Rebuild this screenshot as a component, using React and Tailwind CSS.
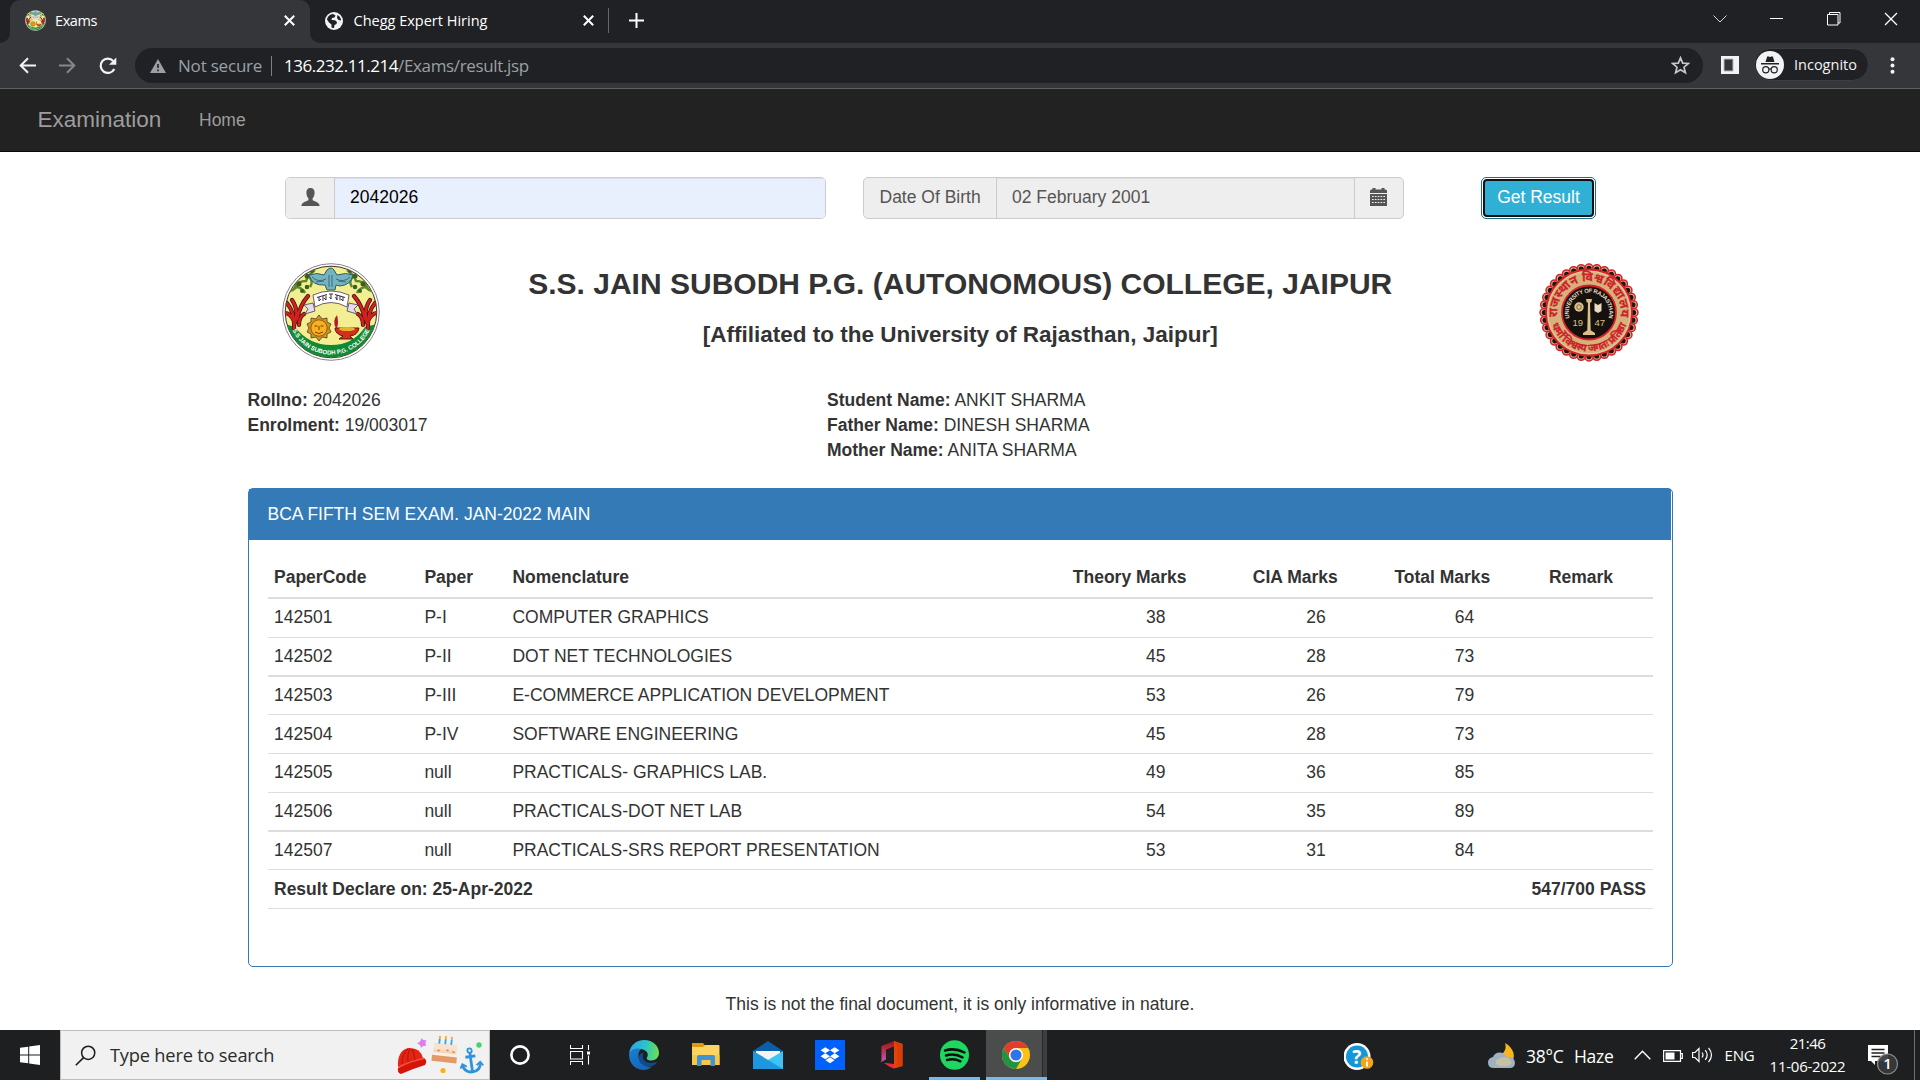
import React from "react";

const SEGOE = "font-['Open_Sans',sans-serif]";

const rows = [
  { code: "142501", paper: "P-I", name: "COMPUTER GRAPHICS", th: 38, cia: 26, total: 64, cls: "h-[39px] pt-[6px] border-b" },
  { code: "142502", paper: "P-II", name: "DOT NET TECHNOLOGIES", th: 45, cia: 28, total: 73, cls: "h-[39px] pt-[6px] border-b-2" },
  { code: "142503", paper: "P-III", name: "E-COMMERCE APPLICATION DEVELOPMENT", th: 53, cia: 26, total: 79, cls: "h-[38px] pt-[6px] border-b" },
  { code: "142504", paper: "P-IV", name: "SOFTWARE ENGINEERING", th: 45, cia: 28, total: 73, cls: "h-[39px] pt-[7px] border-b" },
  { code: "142505", paper: "null", name: "PRACTICALS- GRAPHICS LAB.", th: 49, cia: 36, total: 85, cls: "h-[39px] pt-[6px] border-b" },
  { code: "142506", paper: "null", name: "PRACTICALS-DOT NET LAB", th: 54, cia: 35, total: 89, cls: "h-[39px] pt-[6px] border-b-2" },
  { code: "142507", paper: "null", name: "PRACTICALS-SRS REPORT PRESENTATION", th: 53, cia: 31, total: 84, cls: "h-[38px] pt-[6px] border-b" },
];

const GRID = "grid grid-cols-[150.4px_88px_560.4px_180px_141.6px_154.5px_1fr] pl-[6px] border-[#dddddd]";

function SubodhLogo({ size }) {
  return (
    <svg width={size} height={size} viewBox="0 0 98 98" className="shrink-0">
      <defs>
        <clipPath id="sub-in"><circle cx="49" cy="49" r="45.500" /></clipPath>
        <path id="sub-arc" d="M7 57 A42.800 42.800 0 0 0 91 57" />
      </defs>
      <circle cx="49" cy="49" r="48.300" fill="#fff" stroke="#8d7f8b" strokeWidth="1" />
      <circle cx="49" cy="49" r="45.800" fill="#f4ee92" stroke="#3c3428" strokeWidth="1" />
      <g clipPath="url(#sub-in)">
        <path d="M3 61 L13 64 Q27 82 49 82 Q71 82 83 64 L95 61 V98 H3Z" fill="#118a35" />
        <g fill="none" stroke="#5c8a2c" strokeWidth="2.500">
          <path d="M33 7 Q26 12 24 18 Q16 18 13 24 Q20 24 23 30" />
          <path d="M65 7 Q72 12 74 18 Q82 18 85 24 Q78 24 75 30" />
          <path d="M18 18 q-3 8 -10 10 M80 18 q3 8 10 10" />
          <path d="M27 14 q5 4 1 10 M71 14 q-5 4 -1 10" />
        </g>
        <g fill="#3d5f20">
          <circle cx="25" cy="13" r="2.500" /><circle cx="17" cy="21" r="2.500" /><circle cx="25" cy="24" r="2.300" /><circle cx="30" cy="8" r="2" />
          <circle cx="73" cy="13" r="2.500" /><circle cx="81" cy="21" r="2.500" /><circle cx="73" cy="24" r="2.300" /><circle cx="68" cy="8" r="2" />
          <circle cx="20" cy="28" r="2" /><circle cx="78" cy="28" r="2" />
        </g>
        <g fill="none" stroke="#4a1a14" strokeWidth="4.200" strokeLinecap="round">
          <path d="M12 65 Q13 50 5 40 M13 60 Q17 47 10 37 M15 56 Q18 42 26 33 M12 58 Q8 50 3 50 M17 62 Q17 54 22 51" />
          <path d="M86 65 Q85 50 93 40 M85 60 Q81 47 88 37 M83 56 Q80 42 72 33 M86 58 Q90 50 95 50 M81 62 Q81 54 76 51" />
        </g>
        <g fill="none" stroke="#d3201f" strokeWidth="2.600" strokeLinecap="round">
          <path d="M12 65 Q13 50 5 40 M13 60 Q17 47 10 37 M15 56 Q18 42 26 33 M12 58 Q8 50 3 50 M17 62 Q17 54 22 51" />
          <path d="M86 65 Q85 50 93 40 M85 60 Q81 47 88 37 M83 56 Q80 42 72 33 M86 58 Q90 50 95 50 M81 62 Q81 54 76 51" />
        </g>
        <path d="M45 7 Q49 3 52 7 L55 12 Q64 9 71 12 Q69 22 58 23 L54 22 L53 27 H45 L43 22 Q30 23 27 12 Q35 9 42 12Z" fill="#74b4c0" stroke="#2e5b68" strokeWidth="1" />
        <path d="M30 14 q6 6 14 2 M68 14 q-6 6 -14 2 M34 19 l8 -1 M64 19 l-8 -1 M47 12 v12 M50 12 v12" fill="none" stroke="#34646f" strokeWidth=".9" />
        <path d="M31 32 Q49 24 67 32 L65 44 Q49 35 33 44Z" fill="#fff" stroke="#5a4a68" strokeWidth=".9" />
        <path d="M31 40 L22 42 L26 46 L23 51 L33 48Z M67 40 L76 42 L72 46 L75 51 L65 48Z" fill="#e6dcec" stroke="#5a4a68" strokeWidth=".9" />
        <path d="M35 34.500 L45 31.500 M47 31 L51 31 M53 31.500 L63 34.500 M37 34 v4 l2-2 M41 33 v5 M44 32.500 v4.500 l-2-2 M49 31 v5 l-1.500-2 M55 32 v5 l-1.500-3 M58 33 v4.500 M61 34 v4 l-2-2" stroke="#3b2b40" strokeWidth="1" fill="none" />
        <path d="M37 52 l3 4 5-1 0 4 4 2-2 4 2 4-4 2 0 4-5-1-3 4-3-4-5 1 0-4-4-2 2-4-2-4 4-2 0-4 5 1z" fill="#c7962d" stroke="#6c4515" strokeWidth=".9" />
        <circle cx="37" cy="65" r="8.200" fill="#f7b11f" stroke="#8b4d12" strokeWidth=".9" />
        <path d="M32.500 63 h3 M38.500 63 h3 M37 63 v4 M33 69 q4 3 8 0" stroke="#7a3b10" strokeWidth="1" fill="none" />
        <path d="M53 65 H77 Q76 72 68 73 L71 76 H57 L61 73 Q53 71 53 65Z" fill="#d1301d" stroke="#5b1710" strokeWidth="1" />
        <ellipse cx="65" cy="66" rx="8" ry="2" fill="#e9b22c" />
        <path d="M54 65 Q50 58 55 52 Q57 59 55 65Z" fill="#b5182a" />
      </g>
      <text fontSize="6" fontWeight="700" fill="#fff" fontFamily="Liberation Sans, sans-serif">
        <textPath href="#sub-arc" startOffset="50%" textAnchor="middle">S.S JAIN SUBODH P.G. COLLEGE</textPath>
      </text>
    </svg>
  );
}

function RajasthanLogo() {
  const scallops = Array.from({ length: 36 }, (_, i) => {
    const a = (i * Math.PI * 2) / 36;
    return [50 + 45 * Math.cos(a), 49.5 + 44.5 * Math.sin(a)];
  });
  return (
    <svg width="100" height="99" viewBox="0 0 100 99" className="shrink-0">
      <defs>
        <path id="raj-top" d="M19 57 A31.800 31.800 0 1 1 81 57" />
        <path id="raj-bot" d="M11.500 57 A39.300 39.300 0 0 0 88.500 57" />
        <path id="raj-en" d="M30.500 55 A20.200 20.200 0 1 1 69.500 55" />
      </defs>
      {scallops.map(([x, y], i) => (
        <circle key={i} cx={x} cy={y} r="4" fill="#d8b384" stroke="#d9202c" strokeWidth="1.500" />
      ))}
      {scallops.map(([x, y], i) => (
        <circle key={i} cx={50 + (x - 50) * 0.99} cy={49.5 + (y - 49.5) * 0.99} r="2.600" fill="#1c1510" />
      ))}
      <circle cx="50" cy="49.500" r="43" fill="#d5b27c" stroke="#d9202c" strokeWidth="1.800" />
      <circle cx="50" cy="49.500" r="41.200" fill="none" stroke="#e6cc9c" strokeWidth="1" />
      <circle cx="50" cy="49.500" r="27" fill="#15110e" stroke="#d9202c" strokeWidth="1.800" />
      <g fill="#cf1f2a" stroke="#cf1f2a" strokeWidth=".25" fontWeight="700" fontFamily="Noto Sans Devanagari, Noto Sans, Open Sans, sans-serif">
        <text fontSize="12"><textPath href="#raj-top" startOffset="50%" textAnchor="middle" textLength="108">राजस्थान विश्वविद्यालय</textPath></text>
        <text fontSize="10.500"><textPath href="#raj-bot" startOffset="50%" textAnchor="middle" textLength="98">धर्मो विश्वस्य जगतः प्रतिष्ठा</textPath></text>
      </g>
      <text fontSize="5.800" fontWeight="700" fill="#e9dcc0" fontFamily="Liberation Sans, sans-serif">
        <textPath href="#raj-en" startOffset="50%" textAnchor="middle" textLength="74">UNIVERSITY OF RAJASTHAN</textPath>
      </text>
      <path d="M47 36 h6 l-.7 3.500 h-4.600z M49 39.500 h2 l.7 28 h-3.400z M44 70 l4-2.500 h4 l4 2.500 v2 h-12z" fill="#dcc08c" />
      <circle cx="40" cy="44" r="4.700" fill="#dcc08c" /><circle cx="40" cy="44" r="2.300" fill="none" stroke="#6b5430" strokeWidth=".8" />
      <path d="M55.500 40 l3.500 2 3.500-2 v8 l-3.500 2 -3.500-2z" fill="#e9dcc0" />
      <g fontSize="9.500" fill="#dcc08c" fontFamily="Liberation Sans, sans-serif">
        <text x="33.500" y="62.500">19</text><text x="55.500" y="62.500">47</text>
      </g>
    </svg>
  );
}

const Cross = ({ s = 11, w = 2 }) => (
  <svg width={s} height={s} viewBox="0 0 11 11"><path d="M.8.8l9.400 9.400M10.200.8L.8 10.200" stroke="#fff" strokeWidth={w} /></svg>
);

function TabStrip() {
  return (
    <div className={"flex h-[43px] bg-[#35363a] text-[14.5px] leading-[20px] text-white " + SEGOE}>
      <div className="w-[10px] rounded-br-[10px] bg-[#202124]" />
      <div className="w-[300px] bg-[#202124]">
        <div className="flex h-full items-center rounded-t-[10px] bg-[#35363a] pb-[2px] pl-[14.500px]">
          <SubodhLogo size={21} />
          <span className="ml-[9.500px] tracking-[-0.400px]">Exams</span>
          <span className="mr-[15px] ml-auto"><Cross /></span>
        </div>
      </div>
      <div className="flex flex-1 items-center rounded-bl-[10px] bg-[#202124] pb-[2px]">
        <svg width="18" height="18" viewBox="0 0 18 18" className="ml-[15px]">
          <circle cx="9" cy="9" r="9" fill="#f1f3f4" />
          <path d="M2 7.500 C2.500 4.500 5 2.200 8 2 L10.500 3.500 L9.500 5.500 L7 6 L6.500 8 L10 8.300 L12 10 L11.500 12 L9.500 13 L9 16 C7.500 16 6.500 15.500 6.500 15.500 L6.500 12.500 L4 10.500 Z" fill="#202124" />
          <path d="M12.500 3 L12 6 L13.500 8 L16 8.500 C16 6 14.500 4 12.500 3Z" fill="#202124" />
        </svg>
        <span className="ml-[10.500px]">Chegg Expert Hiring</span>
        <span className="ml-[96px]"><Cross /></span>
        <span className="ml-[14px] h-[25px] w-px bg-[#65666a]" />
        <svg width="15" height="15" viewBox="0 0 15 15" className="ml-[20px]"><path d="M7.500 0v15M0 7.500h15" stroke="#fff" strokeWidth="2" /></svg>
        <div className="mr-[22px] mb-[4px] ml-auto flex items-center">
          <svg width="14" height="8" viewBox="0 0 14 8"><path d="M.5.5l6.500 6.500L13.500.5" fill="none" stroke="#d5d6d8" strokeWidth="1" /></svg>
          <span className="ml-[43px] h-px w-[13px] bg-white" />
          <svg width="14" height="14" viewBox="0 0 14 14" className="ml-[44px]"><path d="M.5 2.500h10.500v10.500h-10.500zM2.500 2.500v-2h10.500v10.500h-2" fill="none" stroke="#fff" strokeWidth="1" /></svg>
          <span className="ml-[43px]"><Cross s={14} w={1} /></span>
        </div>
      </div>
    </div>
  );
}

function Toolbar() {
  return (
    <div className={"flex h-[46px] items-start border-b border-[#5f6062] bg-[#35363a] pt-[5px] text-[17px] " + SEGOE}>
      <div className="flex h-[35px] w-[135px] items-center pl-[19px]">
        <svg width="17" height="17" viewBox="0 0 17 17"><path d="M17 8.500H2M9 1.200L1.700 8.500L9 15.800" fill="none" stroke="#f1f3f4" strokeWidth="2" /></svg>
        <svg width="17" height="17" viewBox="0 0 17 17" className="ml-[23px]"><path d="M0 8.500H15M8 1.200L15.300 8.500L8 15.800" fill="none" stroke="#86878a" strokeWidth="2" /></svg>
        <svg width="18" height="18" viewBox="0 0 18 18" className="ml-[23px]"><path d="M15.300 12A7.200 7.200 0 1 1 14.200 3.900" fill="none" stroke="#f1f3f4" strokeWidth="2.200" /><path d="M17.300.5V7.800H10Z" fill="#f1f3f4" /></svg>
      </div>
      <div className="flex h-[35px] w-[1568px] items-center rounded-full bg-[#202124] pr-[14px] pl-[15px]">
        <svg width="16" height="14" viewBox="0 0 16 14"><path d="M8 0L16 14H0Z" fill="#9aa0a6" /><path d="M8 5v4M8 10.500v1.700" stroke="#202124" strokeWidth="1.600" /></svg>
        <span className="ml-[12px] w-[93px] tracking-[-0.200px] text-[#9aa0a6]">Not secure</span>
        <span className="h-[20px] w-px bg-[#7d8186]" />
        <span className="ml-[12px] tracking-[-0.450px] text-white">136.232.11.214</span>
        <span className="tracking-[-0.350px] text-[#9aa0a6]">/Exams/result.jsp</span>
        <svg width="19" height="19" viewBox="0 0 19 19" className="mr-[-1px] ml-auto"><path d="M9.500 1.800L11.700 7.100L17.400 7.500L13 11.200L14.400 16.800L9.500 13.800L4.600 16.800L6 11.200L1.600 7.500L7.300 7.100Z" fill="none" stroke="#c5c7ca" strokeWidth="1.700" /></svg>
      </div>
      <svg width="18" height="18" viewBox="0 0 18 18" className="mt-[8px] ml-[18px]"><path d="M0 0H18V18H0Z M3 3V15H12V3Z" fill="#f1f3f4" fillRule="evenodd" /><path d="M3 3H12V15H3Z" fill="none" stroke="#b9babd" strokeWidth="1" /></svg>
      <div className="ml-[15px] flex h-[33px] w-[115px] items-center rounded-full border border-[#3c3d41] bg-[#202124] pl-px text-[14.5px] text-[#f1f3f4]">
        <svg width="28" height="28" viewBox="0 0 28 28">
          <circle cx="14" cy="14" r="14" fill="#f1f3f4" />
          <path d="M9.500 11L11 6Q11.500 5 12.500 5.500L14 6L15.500 5.500Q16.500 5 17 6L18.500 11Z M5 12h18v1.400H5z" fill="#202124" />
          <circle cx="9.800" cy="18.700" r="3.100" fill="none" stroke="#202124" strokeWidth="1.200" /><circle cx="18.200" cy="18.700" r="3.100" fill="none" stroke="#202124" strokeWidth="1.200" />
          <path d="M12.800 18.200q1.200-.9 2.400 0" fill="none" stroke="#202124" strokeWidth="1.200" />
        </svg>
        <span className="ml-[10px] leading-[20px]">Incognito</span>
      </div>
      <svg width="5" height="17" viewBox="0 0 5 17" className="mt-[9px] ml-[21px]"><g fill="#f1f3f4"><circle cx="2.500" cy="2.200" r="2" /><circle cx="2.500" cy="8.500" r="2" /><circle cx="2.500" cy="14.800" r="2" /></g></svg>
    </div>
  );
}

function FormRow() {
  return (
    <div className="mt-[25px] flex h-[42px] pl-[285px] leading-[25px] text-[#555555]">
      <div className="flex w-[541px] overflow-hidden rounded-[5px] border border-[#cccccc]">
        <div className="flex w-[49px] items-center justify-center border-r border-[#cccccc] bg-[#eeeeee] pb-[2px]">
          <svg width="19" height="18" viewBox="0 0 19 18"><path d="M9.500 0C12.500 0 13.800 2 13.600 5C13.500 7 12.800 9 11.600 10.300V12C12 13.300 18.200 13.500 18.700 18H.3C.8 13.500 7 13.300 7.400 12V10.300C6.200 9 5.500 7 5.400 5C5.200 2 6.500 0 9.500 0Z" fill="#555" /></svg>
        </div>
        <div className="flex-1 bg-[#e8f0fe] pt-[7px] pl-[15px] text-black shadow-[inset_0_1px_1px_rgba(0,0,0,0.075)]">2042026</div>
      </div>
      <div className="ml-[37px] flex w-[541px] overflow-hidden rounded-[5px] border border-[#cccccc] bg-[#eeeeee]">
        <div className="w-[133px] border-r border-[#cccccc] pt-[7px] pl-[15.500px]">Date Of Birth</div>
        <div className="flex-1 pt-[7px] pl-[15px] shadow-[inset_0_1px_1px_rgba(0,0,0,0.075)]">02 February 2001</div>
        <div className="flex w-[49px] items-center border-l border-[#cccccc] pb-[2px] pl-[15px]">
          <svg width="17" height="18" viewBox="0 0 17 18"><path d="M0 5V3Q0 1.500 1.500 1.500H2.500V0H5.500V1.500H11.500V0H14.500V1.500H15.500Q17 1.500 17 3V5Z M0 6H17V18H0Z" fill="#555" /><path d="M2 8.500h13M2 11.500h13M2 14.500h13" stroke="#eee" strokeWidth="1.100" strokeDasharray="1.700 1.130" /></svg>
        </div>
      </div>
      <div className="ml-[77px] w-[115px] rounded-[5px] border border-[#1b6d85] bg-white p-px text-center text-white">
        <div className="h-full rounded-[4px] border-2 border-[#101010] bg-[#31b0d5] pt-[4px]">Get Result</div>
      </div>
    </div>
  );
}

function ResultPanel() {
  return (
    <div className="mt-[25px] ml-[248px] h-[479px] w-[1425px] rounded-[5px] border border-[#337ab7] leading-[25px]">
      <div className="h-[51px] w-[1422px] bg-[#337ab7] pt-[13px] pl-[18.500px] text-white">BCA FIFTH SEM EXAM. JAN-2022 MAIN</div>
      <div className="mt-[18px] mr-[19px] ml-[19px]">
        <div className={GRID + " h-[41px] border-b-2 pt-[7px] font-bold"}>
          {["PaperCode", "Paper", "Nomenclature", "Theory Marks", "CIA Marks", "Total Marks", "Remark"].map((h) => <span key={h}>{h}</span>)}
        </div>
        {rows.map((r) => (
          <div key={r.code} className={GRID + " " + r.cls}>
            <span>{r.code}</span>
            <span>{r.paper}</span>
            <span>{r.name}</span>
            <span className="pl-[73.200px]">{r.th}</span>
            <span className="pl-[53.500px]">{r.cia}</span>
            <span className="pl-[60.400px]">{r.total}</span>
          </div>
        ))}
        <div className="flex h-[39px] justify-between border-b border-[#dddddd] pt-[7px] pr-[7px] pl-[6px] font-bold">
          <span>Result Declare on: 25-Apr-2022</span>
          <span>547/700 PASS</span>
        </div>
      </div>
    </div>
  );
}

function SearchArt() {
  return (
    <svg width="88" height="40" viewBox="0 0 88 40" className="mt-[5px] mr-px ml-auto">
      <path d="M24.500 3 q1.500 3 5 2 q-2 3 0 6 q-3.500-1-5.500 2 q0-3.500-4-4.500 q4-2 4.500-5.500z" fill="#dd7bf5" transform="translate(0 -1)" />
      <path d="M1 31 Q0 15 11 12 Q23 11 26 22Z" fill="#e42414" />
      <path d="M5 28 Q5 17 11 13 M11 26 Q10 17 13 13 M18 24 Q17 16 15 13" stroke="#b51408" fill="none" />
      <path d="M1 32 Q14 24 27 22 Q31 25 28 29 Q15 33 4 38 Q0 37 1 32Z" fill="#d41409" />
      <path d="M2 31 Q14 25 27 22.500" stroke="#f4503c" fill="none" strokeWidth="1.500" />
      <g transform="rotate(6 46 20)">
        <path d="M36 8h23v16H36z" fill="#f4d5b8" /><path d="M36 8h23v5q-3 4-5 0q-3 4-6 0q-3 3-6 0q-3 3-6 0z" fill="#f7e3cf" />
        <path d="M36 17h23v4H36z" fill="#fff1e2" /><path d="M35 20h25v6H35z" fill="#e29a68" />
        <path d="M41 3v5M47 3v5M53 3v5" stroke="#39a4dd" strokeWidth="1.800" /><path d="M41 0v3M47 0v3M53 0v3" stroke="#f7a928" strokeWidth="1.800" />
        <path d="M40 15h2M49 14h2M55 15h2" stroke="#d8743c" strokeWidth="1.500" />
      </g>
      <circle cx="46" cy="34.500" r="2.600" fill="#fbb116" />
      <circle cx="82" cy="9" r="2.700" fill="#46d36c" />
      <g fill="none" stroke="#2f93d8" strokeWidth="2.800" transform="rotate(-8 74 25)">
        <circle cx="74" cy="14.500" r="2.200" strokeWidth="1.800" /><path d="M74 17V36M69 20.500h10M65 28Q66 36 74 36Q82 36 83 28" />
        <path d="M62.500 31l2.500-4 4 3M85.500 31l-2.500-4-4 3" strokeWidth="1.800" />
      </g>
    </svg>
  );
}

function Taskbar() {
  return (
    <div className={"flex h-[50px] bg-[#1e1f20] text-white " + SEGOE}>
      <div className="flex w-[60px] items-center justify-center">
        <svg width="20" height="20" viewBox="0 0 20 20"><path d="M0 2.800L8.200 1.700V9.500H0Z M9.200 1.500L20 0V9.500H9.200Z M0 10.500H8.200V18.300L0 17.200Z M9.200 10.500H20V20L9.200 18.500Z" fill="#fff" /></svg>
      </div>
      <div className="flex w-[430px] items-start border border-[#bdbdbd] bg-[#f1f1f1] pr-[3px] pl-[14px]">
        <svg width="21" height="21" viewBox="0 0 21 21" className="mt-[14px]"><circle cx="13.200" cy="7.800" r="6.600" fill="none" stroke="#1c1c1c" strokeWidth="1.500" /><path d="M8.600 12.600L.8 20.300" stroke="#1c1c1c" strokeWidth="1.600" /></svg>
        <span className="mt-[11px] ml-[14px] text-[18.250px] leading-[26px] tracking-[-0.200px] text-[#2b2b2b]">Type here to search</span>
        <SearchArt />
      </div>
      <svg width="22" height="22" viewBox="0 0 22 22" className="mt-[14px] ml-[19px]"><circle cx="11" cy="11" r="8.600" fill="none" stroke="#fff" strokeWidth="2.600" /></svg>
      <svg width="20" height="20" viewBox="0 0 20 20" className="mt-[15px] ml-[39px]"><path d="M.5 0v3.500h12V0M.5 6.500h12v7.500h-12zM.5 20v-3.500h12V20M18.500 0v5M18.500 10.500v9" fill="none" stroke="#fff" strokeWidth="1.100" /><path d="M17 6.500h3v3h-3z" fill="#fff" /></svg>
      {/* Edge */}
      <svg width="30" height="30" viewBox="0 0 30 30" className="mt-[10px] ml-[39px]">
        <defs>
          <linearGradient id="eg1" x1="0" x2="1" y1=".3" y2=".4"><stop offset="0" stopColor="#2aa3e8" /><stop offset=".55" stopColor="#2cc4c8" /><stop offset="1" stopColor="#6be04e" /></linearGradient>
          <linearGradient id="eg2" x1="0" x2=".7" y1="0" y2="1"><stop offset="0" stopColor="#1b7fd0" /><stop offset="1" stopColor="#1464b8" /></linearGradient>
        </defs>
        <path d="M0 14C1 5 7.500 0 15 0C24 0 30 6 30 13C30 17.500 26.500 20.500 22.500 20.500C18.500 20.500 17 19 18 17.500C20 14 18 10 12 9C6 8.500 1.500 11 0 14Z" fill="url(#eg1)" />
        <path d="M0 14.500C1.500 9 8 7.500 12 9C10 11 9 14 9.500 17C10.500 23 16 27.500 23 26.500C20.500 29 17.500 30 15 30C6.500 30 0 23.500 0 14.500Z" fill="url(#eg2)" />
        <path d="M14.500 12.500C11.500 13 9.300 16 10 19C11 25 18 27.500 24 25.800C26 25 27.500 23 28 21.500C24 24 15 23.500 14 18C13.700 16 14 14 14.500 12.500Z" fill="#114a8f" />
      </svg>
      {/* File Explorer */}
      <svg width="28" height="24" viewBox="0 0 28 24" className="mt-[13px] ml-[33px]">
        <path d="M0 0H11L13 2.500V5H0Z" fill="#dd9a0c" /><path d="M0 4H11L13 2H26.500Q27.500 2 27.500 3V22H0Z" fill="#fcd461" /><path d="M0 12H27.500V22H0Z" fill="#f6c749" />
        <path d="M5 23V14Q5 12 7 12H21Q23 12 23 14V23H18.500V17H9.500V23Z" fill="#4093d5" />
      </svg>
      {/* Mail */}
      <svg width="30" height="29" viewBox="0 0 30 29" className="mt-[11px] ml-[33px]">
        <path d="M15 0L30 10V14H0V10Z" fill="#0c5ea8" /><path d="M3 10H27V20H3Z" fill="#f3f3f3" /><path d="M0 10L15 19L30 10V28H0Z" fill="#3cc5f3" /><path d="M0 10L30 28H0Z" fill="#1f97de" />
      </svg>
      {/* Dropbox */}
      <svg width="30" height="30" viewBox="0 0 30 30" className="mt-[10px] ml-[32px]">
        <path d="M0 0h30v30H0z" fill="#0061ff" /><path d="M10.300 7.200l4.700 3-4.700 3-4.700-3z M19.700 7.200l4.700 3-4.700 3-4.700-3z M10.300 13.200l4.700 3-4.700 3-4.700-3z M19.700 13.200l4.700 3-4.700 3-4.700-3z M15 17.200l4.500 3-4.500 3-4.500-3z" fill="#fff" />
      </svg>
      {/* Office */}
      <svg width="23" height="28" viewBox="0 0 23 28" className="mt-[11px] ml-[35px]">
        <defs><linearGradient id="of" x1="0" x2="0" y1="0" y2="1"><stop offset="0" stopColor="#a5130b" /><stop offset="1" stopColor="#c65ab8" /></linearGradient></defs>
        <path d="M14 0L22.500 3V25L14 27.500L4 22L14 23V5.500Z" fill="#e8430c" /><path d="M14 0L22.500 3V25L17 26.500V6Z" fill="#dc3c05" />
        <path d="M14 0L1.500 5V20L0 21.500L6 18.500V8.500L14 5.500Z" fill="url(#of)" /><path d="M4 22L14 23.500V27.500L10 26Z" fill="#f0243f" />
      </svg>
      {/* Spotify */}
      <div className="ml-[26px] flex w-[51px] flex-col items-center border-b-[3px] border-[#76b9ed] pt-[10px]">
        <svg width="29" height="30" viewBox="0 0 29 30"><ellipse cx="14.500" cy="15" rx="14.500" ry="14.700" fill="#1ed760" /><path d="M5 10.500Q15 7.500 24.500 12.500M6 15.500Q14.500 13 22.500 17.300M7 20Q14 18 20.500 21.300" fill="none" stroke="#0d0d0d" strokeWidth="2.500" strokeLinecap="round" /></svg>
      </div>
      {/* Chrome */}
      <div className="ml-[6px] flex w-[61px] border-b-[3px] border-[#76b9ed] bg-[#3c3e3f]">
        <div className="flex w-[57px] justify-center border-r border-[#262727] bg-[#4b4d4d] pt-[11px]">
          <svg width="28" height="28" viewBox="0 0 48 48" className="ml-[4px]">
            <circle cx="24" cy="24" r="24" fill="#fbc116" />
            <path d="M3.200 12A24 24 0 0 1 44.800 12H24A12 12 0 0 0 13.600 30Z" fill="#e33b2e" />
            <path d="M3.200 12A24 24 0 0 0 24 48L34.400 30A12 12 0 0 1 13.600 30Z" fill="#229342" />
            <circle cx="24" cy="24" r="12" fill="#fff" /><circle cx="24" cy="24" r="9.500" fill="#2f74e8" />
          </svg>
        </div>
      </div>
      {/* Help */}
      <svg width="30" height="28" viewBox="0 0 30 28" className="mt-[13px] ml-[297px]">
        <circle cx="13" cy="13.500" r="13.500" fill="#fff" /><circle cx="13" cy="13.500" r="11" fill="#1397d8" />
        <text x="12.800" y="20.500" textAnchor="middle" fontSize="19" fontWeight="700" fill="#fff" fontFamily="Open Sans, sans-serif">?</text>
        <circle cx="23" cy="19.500" r="6.300" fill="#f4a51c" />
        <path d="M23 18.500v5M23 15.300v1.800" stroke="#fff" strokeWidth="1.800" />
      </svg>
      {/* Weather */}
      <svg width="28" height="26" viewBox="0 0 28 26" className="mt-[13px] ml-[114px]">
        <path d="M17 0Q20 9 9 14Q14 22 22 20Q27 16 25.500 10Q23 3 17 0Z" fill="#f9b71b" />
        <path d="M6 25Q0 25 0 19.500Q0 15 5 14Q7 9 12.500 9.500Q17 10 18.500 14Q26 13 27 19.500Q27 25 21.500 25Z" fill="#9fb1c3" /><path d="M8 17Q14 13 20 15Q26 19 22 22Q14 25 8 21Z" fill="#d5c995" opacity=".7" />
      </svg>
      <span className="mt-[14px] ml-[10px] w-[48px] text-[17.500px] leading-[24px] tracking-[-0.250px]">38°C</span>
      <span className="mt-[14px] w-[59.500px] text-[17.500px] leading-[24px] tracking-[-0.300px]">Haze</span>
      <svg width="17" height="10" viewBox="0 0 17 10" className="mt-[20px]"><path d="M.7 9.300L8.500 1.200L16.300 9.300" fill="none" stroke="#fff" strokeWidth="1.400" /></svg>
      <svg width="20" height="12" viewBox="0 0 20 12" className="mt-[20px] ml-[12px]"><path d="M.6.6H17.500V11.400H.6Z M17.500 3.500H19.300V8.500H17.500" fill="none" stroke="#fff" strokeWidth="1.200" /><path d="M2.500 2.500h9v7h-9z" fill="#fff" /></svg>
      <svg width="22" height="18" viewBox="0 0 22 18" className="mt-[16px] ml-[9px]"><path d="M.6 6.500H3L7 2.500V15.500L3 11.500H.6Z" fill="none" stroke="#fff" strokeWidth="1.200" /><path d="M10 6.500q2 2.500 0 5M13.200 4.200q4 4.800 0 9.600M16.500 1.800q6 7.200 0 14.400" fill="none" stroke="#fff" strokeWidth="1.200" /></svg>
      <span className="mt-[14px] ml-[11px] w-[30px] text-[15px] leading-[22px] tracking-[-0.200px]">ENG</span>
      <div className="ml-[13px] flex w-[80px] flex-col items-center pt-[2px] text-[15px] leading-[23px]">
        <span className="tracking-[-0.500px]">21:46</span>
        <span className="tracking-[-0.250px]">11-06-2022</span>
      </div>
      <svg width="32" height="32" viewBox="0 0 32 32" className="mt-[14px] ml-[20px]">
        <path d="M0 1H20V17H7V21L3 17H0Z" fill="#fff" /><path d="M3.500 5.500h13M3.500 9h13M3.500 12.500h9" stroke="#202020" strokeWidth="1.300" />
        <circle cx="19.500" cy="20" r="10" fill="#38393a" fillOpacity=".93" stroke="#8b8c8c" strokeWidth="1.200" />
        <text x="19.500" y="25.200" textAnchor="middle" fontSize="15" fontWeight="600" fill="#fff" fontFamily="Open Sans, sans-serif">1</text>
      </svg>
      <span className="mr-[5px] ml-auto w-px bg-[#6d6e6e]" />
    </div>
  );
}

export default function App() {
  return (
    <div className="flex h-[1080px] w-[1920px] flex-col overflow-hidden bg-white font-['Liberation_Sans',Arial,sans-serif] text-[17.500px] text-[#333333]">
      <TabStrip />
      <Toolbar />
      <nav className="flex h-[63px] border-b border-[#080808] bg-[#222222] text-[#9d9d9d]">
        <span className="mt-[18px] ml-[37.500px] w-[161.500px] text-[22.500px] leading-[25px]">Examination</span>
        <span className="mt-[19px] leading-[25px]">Home</span>
      </nav>
      <main className="h-[878px]">
        <FormRow />
        <div className="mt-[44px] flex h-[99px] pr-[281px] pl-[281.500px]">
          <SubodhLogo size={98} />
          <div className="flex-1 pl-[2px] text-center font-bold">
            <h2 className="mt-[4px] text-[30px] leading-[33px]">S.S. JAIN SUBODH P.G. (AUTONOMOUS) COLLEGE, JAIPUR</h2>
            <h3 className="mt-[22px] text-[22.500px] leading-[25px]">[Affiliated to the University of Rajasthan, Jaipur]</h3>
          </div>
          <RajasthanLogo />
        </div>
        <div className="mt-[26px] flex h-[75px] pl-[247.500px] leading-[25px]">
          <div className="w-[579.500px]">
            <div><b>Rollno:</b> 2042026</div>
            <div><b>Enrolment:</b> 19/003017</div>
          </div>
          <div>
            <div><b>Student Name:</b> ANKIT SHARMA</div>
            <div><b>Father Name:</b> DINESH SHARMA</div>
            <div><b>Mother Name:</b> ANITA SHARMA</div>
          </div>
        </div>
        <ResultPanel />
        <p className="mt-[25px] text-center leading-[25px]">This is not the final document, it is only informative in nature.</p>
      </main>
      <Taskbar />
    </div>
  );
}
